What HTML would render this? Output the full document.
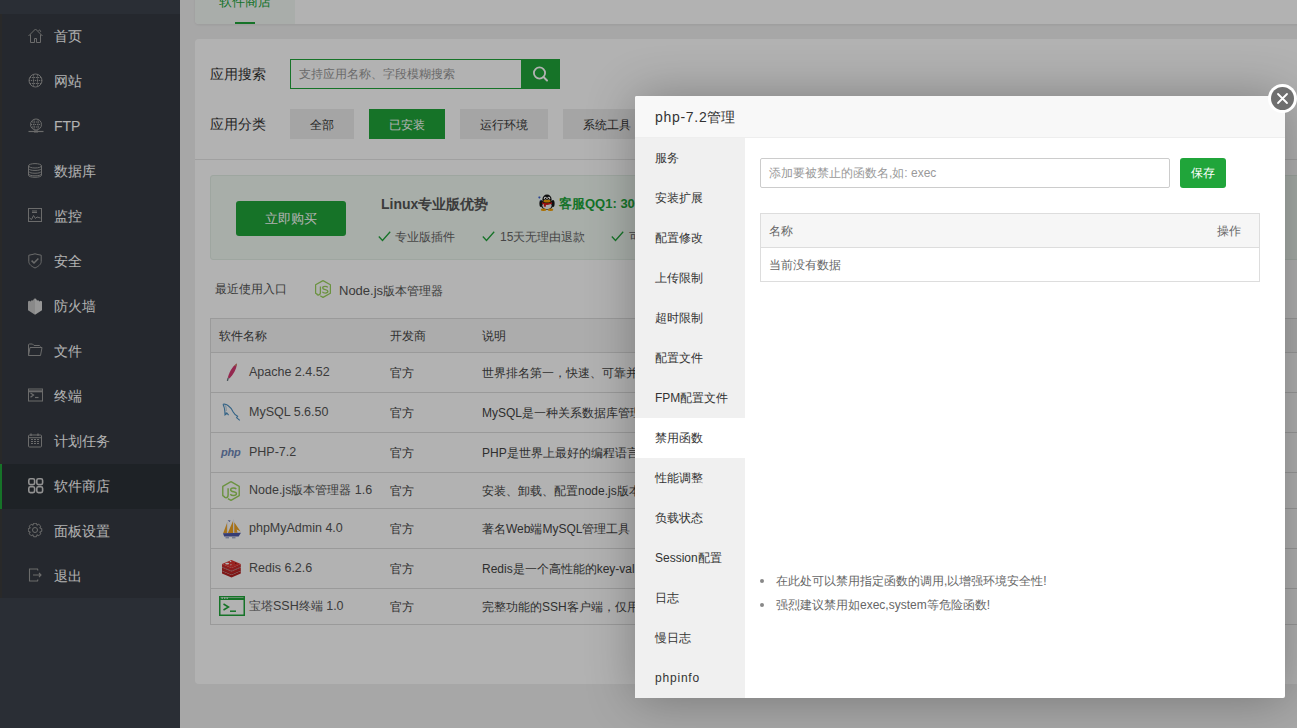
<!DOCTYPE html>
<html><head><meta charset="utf-8">
<style>
*{margin:0;padding:0;box-sizing:border-box;}
html,body{width:1297px;height:728px;overflow:hidden;}
body{font-family:"Liberation Sans",sans-serif;background:#f0f0f0;position:relative;color:#333;}
.t{position:absolute;white-space:nowrap;line-height:1;}
/* sidebar */
#side{position:absolute;left:0;top:0;width:180px;height:728px;background:#3d434c;}
#menu{position:absolute;left:0;top:14px;width:180px;height:584px;background:#353a42;overflow:hidden;}
#menu .strip{position:absolute;left:0;top:0;width:2px;height:585px;background:#3c3c3c;}
.mi{position:absolute;left:0;width:180px;height:45px;}
.mi .ic{position:absolute;left:28px;top:14px;width:16px;height:16px;line-height:0;}
.mi .lb{position:absolute;left:54px;top:14px;font-size:14px;line-height:16px;color:#fff;}
.mi.cur{background:#2c3137;}
.mi.cur:before{content:"";position:absolute;left:0;top:0;width:2px;height:45px;background:#20a53a;}
/* main */
#tabcard{position:absolute;left:195px;top:-20px;width:1120px;height:44px;background:#fff;border-radius:4px;box-shadow:0 1px 3px rgba(0,0,0,.08);overflow:hidden;}
#tabact{position:absolute;left:0;top:0;width:100px;height:44px;background:#f3f8f4;}
#card{position:absolute;left:195px;top:39px;width:1120px;height:645px;background:#fff;border-radius:4px;}
.btn{position:absolute;height:30px;line-height:30px;padding-top:1px;text-align:center;font-size:12px;background:#ececec;color:#333;}
.btn.g{background:#20a53a;color:#fff;}
.lbl{position:absolute;font-size:14px;line-height:16px;color:#333;white-space:nowrap;}
/* table */
#tbl{position:absolute;left:210px;top:318px;width:1100px;height:307px;border:1px solid #ddd;}
.hrow{position:absolute;left:0;top:0;width:100%;height:34px;background:#f6f6f6;border-bottom:1px solid #ddd;}
.row{position:absolute;left:0;width:100%;border-bottom:1px solid #ddd;}
.cell{position:absolute;font-size:12px;line-height:14px;color:#444;white-space:nowrap;}
.nm{font-size:12.5px;color:#555;}
/* overlay */
#shade{position:absolute;left:0;top:0;width:1297px;height:728px;background:rgba(0,0,0,.3);}
/* modal */
#modal{position:absolute;left:635px;top:96px;width:650px;height:602px;background:#fff;box-shadow:1px 1px 50px rgba(0,0,0,.3);border-radius:2px;}
#mhead{position:absolute;left:0;top:0;width:650px;height:42px;background:#f8f8f8;border-bottom:1px solid #eee;border-radius:2px 2px 0 0;}
#mmenu{position:absolute;left:0;top:42px;width:110px;height:560px;background:#f0f0f0;}
.mm{position:absolute;left:0;width:110px;height:40px;}
.mm span{position:absolute;left:20px;top:13px;font-size:12px;line-height:14px;color:#333;white-space:nowrap;}
.mm.on{background:#fff;}
#close{position:absolute;left:1268px;top:84px;width:29px;height:29px;border-radius:50%;background:#fff;}
#close .in{position:absolute;left:3px;top:3px;width:23px;height:23px;border-radius:50%;background:#6f6f6f;}
</style></head>
<body>
<div id="side">
  <div id="menu"><div class="strip"></div>
<div class="mi" style="top:0px"><div class="ic"><svg width="16" height="16" viewBox="0 0 16 16"><path d="M0.5 8 L7.5 1 L14.5 8" stroke="#9a9a9a" fill="none" stroke-width="1"/><path d="M2.5 6.5 V14.5 H6.5 V10.5 H8.5 V14.5 H12.5 V6.5" stroke="#9a9a9a" fill="none" stroke-width="1"/><path d="M10.5 2.5 a1.2 1.2 0 1 1 1.8 1.6" stroke="#9a9a9a" fill="none" stroke-width="1"/></svg></div><span class="lb" style="color:#fff">首页</span></div>
<div class="mi" style="top:45px"><div class="ic"><svg width="16" height="16" viewBox="0 0 16 16"><circle cx="7.5" cy="7.5" r="6.5" stroke="#9a9a9a" fill="none" stroke-width="1"/><path d="M1 7.5H14 M2 4.5H13 M2 10.5H13 M5.5 1.5V13.5 M9.5 1.5V13.5" stroke="#9a9a9a" fill="none" stroke-width="1" stroke-dasharray="1.2 0.8"/></svg></div><span class="lb" style="color:#fff">网站</span></div>
<div class="mi" style="top:90px"><div class="ic"><svg width="17" height="16" viewBox="0 0 17 16"><circle cx="8" cy="6.5" r="5.5" stroke="#9a9a9a" fill="none" stroke-width="1"/><path d="M3 6.5H13 M4 4H12 M4 9H12 M6 1.5V11.5 M10 1.5V11.5" stroke="#9a9a9a" fill="none" stroke-width="1" stroke-dasharray="1.2 0.8"/><path d="M0.5 13.5H15.5" stroke="#9a9a9a" stroke-width="1.2"/><rect x="6" y="12.5" width="4" height="2" fill="#9a9a9a"/></svg></div><span class="lb" style="color:#fff">FTP</span></div>
<div class="mi" style="top:135px"><div class="ic"><svg width="16" height="16" viewBox="0 0 16 16"><ellipse cx="7" cy="2.8" rx="6.5" ry="2.2" stroke="#9a9a9a" fill="none" stroke-width="1"/><path d="M0.5 2.8V12.2 C0.5 15 13.5 15 13.5 12.2 V2.8" stroke="#9a9a9a" fill="none" stroke-width="1"/><path d="M1 5.8C1 8 13 8 13 5.8 M1 8.6C1 10.8 13 10.8 13 8.6 M1 11.2C1 13.4 13 13.4 13 11.2" stroke="#9a9a9a" fill="none" stroke-width="1"/></svg></div><span class="lb" style="color:#fff">数据库</span></div>
<div class="mi" style="top:180px"><div class="ic"><svg width="16" height="16" viewBox="0 0 16 16"><rect x="0.5" y="0.5" width="13" height="13" stroke="#9a9a9a" fill="none" stroke-width="1"/><path d="M4 3H9 M4 4.5H9" stroke="#9a9a9a" fill="none" stroke-width="1"/><path d="M1.5 10L3.5 11.5L5.5 7.5L7.5 10.5L9 9L12.5 10" stroke="#9a9a9a" fill="none" stroke-width="1"/></svg></div><span class="lb" style="color:#fff">监控</span></div>
<div class="mi" style="top:225px"><div class="ic"><svg width="16" height="16" viewBox="0 0 16 16"><path d="M7 0.8 C5 1.2 3 2 0.8 2.2 V8.5 C0.8 11.5 4 13.6 7 15 C10 13.6 13.2 11.5 13.2 8.5 V2.2 C11 2 9 1.2 7 0.8Z" stroke="#9a9a9a" fill="none" stroke-width="1"/><path d="M3.6 7.6L6 10L10.4 5.4" stroke="#9a9a9a" fill="none" stroke-width="1.5"/></svg></div><span class="lb" style="color:#fff">安全</span></div>
<div class="mi" style="top:270px"><div class="ic"><svg width="16" height="18" viewBox="0 0 16 18"><path d="M0 3.6 L1.3 2.8 L2.6 3.4 L3.6 2.2 L5 2.4 L6 0.8 L7 0.6 L7 16.8 L0 12.2Z" fill="#c4c4c4"/><path d="M7 0.6 L8 0.8 L9 2.4 L10.4 2.2 L11.4 3.4 L12.7 2.8 L14 3.6 V12.2 L7 16.8Z" fill="#d8d8d8"/></svg></div><span class="lb" style="color:#fff">防火墙</span></div>
<div class="mi" style="top:315px"><div class="ic"><svg width="16" height="16" viewBox="0 0 16 16"><path d="M0.5 12.5V2 C0.5 1.2 1 1 1.5 1H4.5L6 2.5H11.5L12.5 3.5" stroke="#9a9a9a" fill="none" stroke-width="1"/><path d="M0.5 12.5L2 4.5H14L12.5 12.5Z" stroke="#9a9a9a" fill="none" stroke-width="1"/></svg></div><span class="lb" style="color:#fff">文件</span></div>
<div class="mi" style="top:360px"><div class="ic"><svg width="16" height="16" viewBox="0 0 16 16"><rect x="0.5" y="1" width="14" height="12" stroke="#9a9a9a" fill="none" stroke-width="1"/><path d="M0.5 3.3H14.5" stroke="#9a9a9a" stroke-width="2"/><path d="M2.5 5L5.5 7L2.5 9.2" stroke="#9a9a9a" fill="none" stroke-width="1.3"/><path d="M7 9.5H10.5" stroke="#9a9a9a" fill="none" stroke-width="1.2"/></svg></div><span class="lb" style="color:#fff">终端</span></div>
<div class="mi" style="top:405px"><div class="ic"><svg width="16" height="16" viewBox="0 0 16 16"><rect x="0.5" y="2" width="13" height="12" rx="1" stroke="#9a9a9a" fill="none" stroke-width="1"/><path d="M0.5 4.7H13.5" stroke="#9a9a9a" fill="none" stroke-width="1"/><path d="M3 0.5V3 M10 0.5V3" stroke="#9a9a9a" fill="none" stroke-width="1.3"/><path d="M3 6.5H5 M6 6.5H8 M9 6.5H11 M3 8.5H5 M6 8.5H8 M9 8.5H11 M3 10.5H5 M6 10.5H8 M9 10.5H11" stroke="#9a9a9a" fill="none" stroke-width="1"/></svg></div><span class="lb" style="color:#fff">计划任务</span></div>
<div class="mi cur" style="top:450px"><div class="ic"><svg width="16" height="16" viewBox="0 0 16 16"><rect x="0.8" y="0.8" width="5.8" height="5.8" rx="1.6" stroke="#d0d0d0" fill="none" stroke-width="1.6"/><rect x="8.8" y="0.8" width="5.8" height="5.8" rx="1.6" stroke="#d0d0d0" fill="none" stroke-width="1.6"/><rect x="0.8" y="8.8" width="5.8" height="5.8" rx="1.6" stroke="#d0d0d0" fill="none" stroke-width="1.6"/><rect x="8.8" y="8.8" width="5.8" height="5.8" rx="1.6" stroke="#d0d0d0" fill="none" stroke-width="1.6"/></svg></div><span class="lb" style="color:#fff">软件商店</span></div>
<div class="mi" style="top:495px"><div class="ic"><svg width="16" height="16" viewBox="0 0 16 16"><polygon points="4.88,2.25 5.63,0.24 8.37,0.24 9.12,2.25 8.86,2.14 10.81,1.25 12.75,3.19 11.86,5.14 11.75,4.88 13.76,5.63 13.76,8.37 11.75,9.12 11.86,8.86 12.75,10.81 10.81,12.75 8.86,11.86 9.12,11.75 8.37,13.76 5.63,13.76 4.88,11.75 5.14,11.86 3.19,12.75 1.25,10.81 2.14,8.86 2.25,9.12 0.24,8.37 0.24,5.63 2.25,4.88 2.14,5.14 1.25,3.19 3.19,1.25 5.14,2.14" stroke="#9a9a9a" fill="none" stroke-width="1" stroke-linejoin="round"/><circle cx="7" cy="7" r="2.5" stroke="#9a9a9a" fill="none" stroke-width="1"/></svg></div><span class="lb" style="color:#fff">面板设置</span></div>
<div class="mi" style="top:540px"><div class="ic"><svg width="16" height="16" viewBox="0 0 16 16"><path d="M10 2.5 L9.5 1 H1.5 V13 H9.5 L10 11.5" stroke="#9a9a9a" fill="none" stroke-width="1.1"/><path d="M5 7H13 M11 5L13 7L11 9" stroke="#9a9a9a" fill="none" stroke-width="1.1"/></svg></div><span class="lb" style="color:#fff">退出</span></div>

  </div>
</div>

<div id="tabcard"><div id="tabact"></div>
  <span class="t" style="left:24px;top:15px;font-size:13px;color:#20a53a;">软件商店</span>
  <div style="position:absolute;left:40px;top:42px;width:20px;height:2px;background:#20a53a;"></div>
</div>

<div id="card"></div>

<span class="lbl" style="left:210px;top:66px;">应用搜索</span>
<div style="position:absolute;left:290px;top:59px;width:232px;height:30px;border:1px solid #20a53a;background:#fff;"></div>
<span class="t" style="left:299px;top:68px;font-size:12px;color:#999;">支持应用名称、字段模糊搜索</span>
<div style="position:absolute;left:521px;top:59px;width:39px;height:30px;background:#20a53a;">
  <svg width="39" height="30" viewBox="0 0 39 30"><circle cx="18.5" cy="14" r="5.6" fill="none" stroke="#fff" stroke-width="1.8"/><path d="M22.5 18 L26 21.5" stroke="#fff" stroke-width="2" stroke-linecap="round"/></svg>
</div>

<span class="lbl" style="left:210px;top:116px;">应用分类</span>
<div class="btn" style="left:290px;top:109px;width:64px;">全部</div>
<div class="btn g" style="left:369px;top:109px;width:76px;">已安装</div>
<div class="btn" style="left:460px;top:109px;width:88px;">运行环境</div>
<div class="btn" style="left:563px;top:109px;width:88px;">系统工具</div>

<div style="position:absolute;left:195px;top:159px;width:1120px;height:1px;background:#e6e6e6;"></div>

<!-- promo -->
<div style="position:absolute;left:210px;top:175px;width:1100px;height:85px;background:#f1f9f3;border:1px solid #e2eee5;border-radius:3px;"></div>
<div style="position:absolute;left:236px;top:201px;width:110px;height:35px;background:#20a53a;border-radius:3px;color:#fff;line-height:35px;text-align:center;font-size:13px;">立即购买</div>
<span class="t" style="left:381px;top:197px;font-size:14px;font-weight:bold;color:#555;">Linux专业版优势</span>
<svg style="position:absolute;left:537px;top:193px" width="20" height="19" viewBox="0 0 20 19">
<ellipse cx="4" cy="10.5" rx="1.6" ry="3.6" fill="#151515"/><ellipse cx="16" cy="10.5" rx="1.6" ry="3.6" fill="#151515"/>
<ellipse cx="10" cy="11.5" rx="6" ry="5.5" fill="#1a1a1a"/><ellipse cx="10" cy="12.6" rx="4.6" ry="3.8" fill="#f4f4f4"/>
<ellipse cx="10" cy="6.5" rx="4.6" ry="5" fill="#151515"/>
<circle cx="8.3" cy="5.2" r="1.4" fill="#fff"/><circle cx="11.8" cy="5.2" r="1.4" fill="#fff"/><circle cx="8.5" cy="5.4" r="0.6" fill="#000"/><circle cx="11.6" cy="5.4" r="0.6" fill="#000"/>
<ellipse cx="10" cy="8.2" rx="3.6" ry="1.4" fill="#f5a000"/>
<path d="M5 9.2 Q10 11.5 15 9.2 L15 10.8 Q10 13 5 10.8Z" fill="#e01818"/><path d="M6.8 10.5 L9.2 11 L8.6 14 L6.8 13.6Z" fill="#e01818"/>
<ellipse cx="6.5" cy="16.8" rx="2.8" ry="1.3" fill="#f5a000"/><ellipse cx="13.5" cy="16.8" rx="2.8" ry="1.3" fill="#f5a000"/>
<path d="M1.4 4.4 H3.4 M2.4 3.4 V5.4" stroke="#3a60d0" stroke-width="1.2"/><circle cx="3.4" cy="7.4" r="0.6" fill="#3a60d0"/>
</svg>
<span class="t" style="left:559px;top:197px;font-size:13px;font-weight:bold;color:#20a53a;">客服QQ1: 3004330799</span>
<svg style="position:absolute;left:378px;top:231px;" width="13" height="11" viewBox="0 0 13 11"><path d="M0.8 5.5 L4.5 9.5 L12.2 0.8" fill="none" stroke="#20a53a" stroke-width="1.3"/></svg>
<span class="t" style="left:395px;top:231px;font-size:12px;color:#666;">专业版插件</span>
<svg style="position:absolute;left:482px;top:231px;" width="13" height="11" viewBox="0 0 13 11"><path d="M0.8 5.5 L4.5 9.5 L12.2 0.8" fill="none" stroke="#20a53a" stroke-width="1.3"/></svg>
<span class="t" style="left:500px;top:231px;font-size:12px;color:#666;">15天无理由退款</span>
<svg style="position:absolute;left:611px;top:231px;" width="13" height="11" viewBox="0 0 13 11"><path d="M0.8 5.5 L4.5 9.5 L12.2 0.8" fill="none" stroke="#20a53a" stroke-width="1.3"/></svg>
<span class="t" style="left:629px;top:231px;font-size:12px;color:#666;">可购买商用插件</span>

<span class="t" style="left:215px;top:283px;font-size:12px;color:#555;">最近使用入口</span>
<svg style="position:absolute;left:315px;top:280px;" width="16" height="18" viewBox="0 0 16 18"><path d="M8 0.6 L15.4 4.8 V13.2 L8 17.4 L5.2 15.8 M2.4 14.2 L0.6 13.2 V4.8 L8 0.6" fill="none" stroke="#9ad25c" stroke-width="1.25" stroke-linejoin="round"/><path d="M5.4 6.6 V12.6 C5.4 14.3 4.6 15 3.5 15 C2.7 15 2.1 14.6 1.8 14.1" fill="none" stroke="#9ad25c" stroke-width="1.3"/><path d="M12.8 7.3 C12.3 6.6 11 6.3 10 6.3 C8.6 6.3 7.7 7 7.7 8 C7.7 10.2 12.9 9.2 12.9 11.3 C12.9 12.5 11.8 13.1 10.3 13.1 C8.9 13.1 7.8 12.6 7.4 11.8" fill="none" stroke="#9ad25c" stroke-width="1.3"/></svg>
<span class="t" style="left:339px;top:284px;font-size:13px;color:#555;">Node.js<span style="font-size:12px">版本管理器</span></span>

<!-- table -->
<div id="tbl">
  <div class="hrow"></div>
  <div class="row" style="top:34px;height:40px;"></div>
  <div class="row" style="top:74px;height:40px;"></div>
  <div class="row" style="top:114px;height:40px;"></div>
  <div class="row" style="top:154px;height:36px;"></div>
  <div class="row" style="top:190px;height:40px;"></div>
  <div class="row" style="top:230px;height:40px;"></div>
</div>
<span class="cell" style="left:219px;top:329px;">软件名称</span>
<span class="cell" style="left:390px;top:329px;">开发商</span>
<span class="cell" style="left:482px;top:329px;">说明</span>

<svg style="position:absolute;left:222px;top:360px" width="20" height="24" viewBox="0 0 20 24"><path d="M15 3.4 C12 5 8 9.5 5.8 17.4 L7.4 18.4 C11 14.5 14.4 9.8 15 3.4Z" fill="#d43a72"/><path d="M15 3.2 L14.2 6 L12.4 5.4Z" fill="#c8a060"/><path d="M6.2 17.8 L5.4 20.8" stroke="#607078" stroke-width="1.3"/></svg><span class="cell nm" style="left:249px;top:365px;line-height:15px;">Apache 2.4.52</span><span class="cell" style="left:390px;top:366px;">官方</span><span class="cell" style="left:482px;top:366px;">世界排名第一，快速、可靠并且可通过简单的API扩充</span>
<svg style="position:absolute;left:220px;top:400px" width="22" height="24" viewBox="0 0 22 24"><path d="M3 4.3 Q5.5 3.6 8 5.5 Q11.5 8 13.2 12 Q14.8 15 17.6 16.2 L16.6 17.6 L19.8 20.3" fill="none" stroke="#4a8ec0" stroke-width="1.1"/><path d="M3 4.3 Q4.6 7.5 4.8 11 L5 14.8 L7 13.2 L8.6 15.2" fill="none" stroke="#4a8ec0" stroke-width="1.1"/><path d="M4.4 5 Q5.6 5.2 6 7 Q6.2 9 6.2 11" fill="none" stroke="#8ab0cc" stroke-width="0.7"/><path d="M5.2 12.5 L7.2 12.5 L5.8 14.8Z" fill="#4a8ec0"/></svg><span class="cell nm" style="left:249px;top:405px;line-height:15px;">MySQL 5.6.50</span><span class="cell" style="left:390px;top:406px;">官方</span><span class="cell" style="left:482px;top:406px;">MySQL是一种关系数据库管理系统！</span>
<span class="t" style="left:221px;top:447px;font-size:11px;font-weight:bold;font-style:italic;color:#7088b8;letter-spacing:-0.2px;">php</span><span class="cell nm" style="left:249px;top:445px;line-height:15px;">PHP-7.2</span><span class="cell" style="left:390px;top:446px;">官方</span><span class="cell" style="left:482px;top:446px;">PHP是世界上最好的编程语言</span>
<svg style="position:absolute;left:222px;top:481px" width="18" height="20" viewBox="0 0 16 18"><path d="M8 0.6 L15.4 4.8 V13.2 L8 17.4 L5.2 15.8 M2.4 14.2 L0.6 13.2 V4.8 L8 0.6" fill="none" stroke="#9ad25c" stroke-width="1.25" stroke-linejoin="round"/><path d="M5.4 6.6 V12.6 C5.4 14.3 4.6 15 3.5 15 C2.7 15 2.1 14.6 1.8 14.1" fill="none" stroke="#9ad25c" stroke-width="1.3"/><path d="M12.8 7.3 C12.3 6.6 11 6.3 10 6.3 C8.6 6.3 7.7 7 7.7 8 C7.7 10.2 12.9 9.2 12.9 11.3 C12.9 12.5 11.8 13.1 10.3 13.1 C8.9 13.1 7.8 12.6 7.4 11.8" fill="none" stroke="#9ad25c" stroke-width="1.3"/></svg><span class="cell nm" style="left:249px;top:483px;line-height:15px;">Node.js<span style="font-size:12px">版本管理器</span> 1.6</span><span class="cell" style="left:390px;top:484px;">官方</span><span class="cell" style="left:482px;top:484px;">安装、卸载、配置node.js版本</span>
<svg style="position:absolute;left:219px;top:515px" width="24" height="24" viewBox="0 0 24 24"><path d="M8 8 L4.2 18.2 L8 18.2Z" fill="#f0a422"/><path d="M14 6 L8.8 18 L14 18Z" fill="#f0a422"/><path d="M15.2 7.2 L15.2 17.8 L18.6 17.8 L17.6 14.6 L21.6 16.4 Z" fill="#f0a422"/><path d="M8.4 7 L8.4 18.3 M14.6 4.6 L14.6 18.3" stroke="#e8e8f0" stroke-width="0.9"/><path d="M8.6 5.2 L11.6 5.6 L10.6 6.9Z" fill="#5a6aa8"/><path d="M4 18.2 L22 17.8 L19.6 21.4 L5.2 21.6Z" fill="#4e58a8"/><path d="M6.5 22.8 L10 22.8 M13 22.8 L16.5 22.8" stroke="#7080b0" stroke-width="0.9"/></svg><span class="cell nm" style="left:249px;top:521px;line-height:15px;">phpMyAdmin 4.0</span><span class="cell" style="left:390px;top:522px;">官方</span><span class="cell" style="left:482px;top:522px;">著名Web端MySQL管理工具</span>
<svg style="position:absolute;left:221px;top:559px" width="21" height="20" viewBox="0 0 21 20"><path d="M1 12 L10.5 16 L19.8 12 V14.6 L10.5 18.6 L1 14.6Z" fill="#b42222"/><path d="M1 8.5 L10.5 12.5 L19.8 8.5 V11.4 L10.5 15.4 L1 11.4Z" fill="#c02626"/><path d="M1 5 L10.5 9 L19.8 5 V7.8 L10.5 11.8 L1 7.8Z" fill="#cc2a2a"/><path d="M1 5 L10.5 1 L19.8 5 L10.5 9Z" fill="#dd3530"/><path d="M1 8 L10.5 12 L19.8 8 M1 11.4 L10.5 15.4 L19.8 11.4" stroke="#8a1515" stroke-width="0.6" fill="none"/><ellipse cx="6.2" cy="4.6" rx="2" ry="0.9" fill="#fff"/><path d="M8.5 1.8 L10.8 2.2 L9.2 3.2Z" fill="#fff"/><path d="M8.8 5.8 L10.8 5.2 L10 6.6Z" fill="#fff"/><path d="M14.2 3.6 L15.8 4.5 L14.3 5Z" fill="#6a0c0c"/></svg><span class="cell nm" style="left:249px;top:561px;line-height:15px;">Redis 6.2.6</span><span class="cell" style="left:390px;top:562px;">官方</span><span class="cell" style="left:482px;top:562px;">Redis是一个高性能的key-value数据库</span>
<svg style="position:absolute;left:219px;top:596px" width="26" height="21" viewBox="0 0 26 21"><rect x="0.75" y="0.75" width="24.5" height="18.5" fill="none" stroke="#20a53a" stroke-width="1.5"/><path d="M0.75 3 H25" stroke="#20a53a" stroke-width="2"/><rect x="2.5" y="1.5" width="1.4" height="1.2" fill="#fff"/><rect x="5" y="1.5" width="1.4" height="1.2" fill="#fff"/><rect x="7.5" y="1.5" width="1.4" height="1.2" fill="#fff"/><path d="M4.5 8 L9.5 11 L4.5 14" fill="none" stroke="#20a53a" stroke-width="1.5"/><path d="M11 15.2 H17" stroke="#20a53a" stroke-width="1.5"/></svg><span class="cell nm" style="left:249px;top:599px;line-height:15px;"><span style="font-size:12px">宝塔</span>SSH<span style="font-size:12px">终端</span> 1.0</span><span class="cell" style="left:390px;top:600px;">官方</span><span class="cell" style="left:482px;top:600px;">完整功能的SSH客户端，仅用于连接本服务器</span>


<div id="shade"></div>

<div id="modal">
  <div id="mhead"><span class="t" style="left:20px;top:13px;font-size:14px;line-height:16px;"><span style="letter-spacing:0.7px">php-7.2</span>管理</span></div>
  <div id="mmenu">
<div class="mm" style="top:0px"><span>服务</span></div>
<div class="mm" style="top:40px"><span>安装扩展</span></div>
<div class="mm" style="top:80px"><span>配置修改</span></div>
<div class="mm" style="top:120px"><span>上传限制</span></div>
<div class="mm" style="top:160px"><span>超时限制</span></div>
<div class="mm" style="top:200px"><span>配置文件</span></div>
<div class="mm" style="top:240px"><span>FPM配置文件</span></div>
<div class="mm on" style="top:280px"><span>禁用函数</span></div>
<div class="mm" style="top:320px"><span>性能调整</span></div>
<div class="mm" style="top:360px"><span>负载状态</span></div>
<div class="mm" style="top:400px"><span>Session配置</span></div>
<div class="mm" style="top:440px"><span>日志</span></div>
<div class="mm" style="top:480px"><span>慢日志</span></div>
<div class="mm" style="top:520px"><span style="letter-spacing:0.8px">phpinfo</span></div>

  </div>
  <div style="position:absolute;left:125px;top:62px;width:410px;height:30px;border:1px solid #ccc;border-radius:2px;"></div>
  <span class="t" style="left:134px;top:71px;font-size:12px;color:#999;">添加要被禁止的函数名,如: exec</span>
  <div style="position:absolute;left:545px;top:62px;width:46px;height:30px;background:#20a53a;border-radius:3px;color:#fff;font-size:12px;line-height:30px;text-align:center;">保存</div>
  <div style="position:absolute;left:125px;top:117px;width:500px;height:69px;border:1px solid #ddd;">
    <div style="position:absolute;left:0;top:0;width:498px;height:34px;background:#f6f6f6;border-bottom:1px solid #ddd;"></div>
    <span class="t" style="left:8px;top:11px;font-size:12px;color:#666;">名称</span>
    <span class="t" style="left:456px;top:11px;font-size:12px;color:#666;">操作</span>
    <span class="t" style="left:8px;top:45px;font-size:12px;color:#666;">当前没有数据</span>
  </div>
  <div style="position:absolute;left:125px;top:473px;font-size:12px;line-height:24px;color:#666;">
    <div style="position:relative;padding-left:16px;"><i style="position:absolute;left:0;top:10px;width:4px;height:4px;border-radius:50%;background:#888;"></i>在此处可以禁用指定函数的调用,以增强环境安全性!</div>
    <div style="position:relative;padding-left:16px;"><i style="position:absolute;left:0;top:10px;width:4px;height:4px;border-radius:50%;background:#888;"></i>强烈建议禁用如exec,system等危险函数!</div>
  </div>
</div>
<div id="close"><div class="in"><svg width="23" height="23" viewBox="0 0 23 23"><path d="M7 7 L16 16 M16 7 L7 16" stroke="#fff" stroke-width="1.8" stroke-linecap="round"/></svg></div></div>
</body></html>
